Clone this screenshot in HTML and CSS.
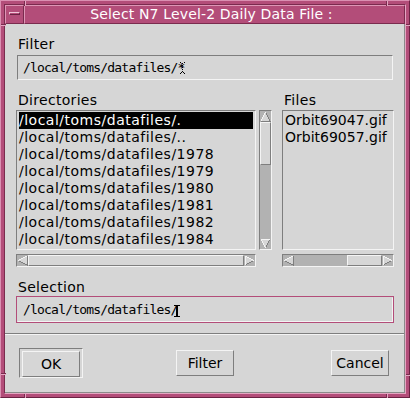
FILE: index.html
```html
<!DOCTYPE html>
<html>
<head>
<meta charset="utf-8">
<link rel="stylesheet" href="styles.css">
</head>
<body>
<div class="win">
  <span class="tick tv" style="left:23px;top:0"></span>
  <span class="tick tv" style="left:385px;top:0"></span>
  <span class="tick tv" style="left:23px;top:393px"></span>
  <span class="tick tv" style="left:385px;top:393px"></span>
  <span class="tick th" style="left:0;top:23px"></span>
  <span class="tick th" style="left:405px;top:23px"></span>
  <span class="tick th" style="left:0;top:372px"></span>
  <span class="tick th" style="left:405px;top:373px"></span>
  <div class="inner">
    <div class="titlebar">
      <div class="menubtn"><span class="menubar"></span></div>
      <div class="title">Select N7 Level-2 Daily Data File :</div>
    </div>
    <div class="content">
      <div class="label">Filter</div>
      <div class="field">
        <div class="field-in"><span class="mono">/local/toms/datafiles/*</span><svg class="cur cur-dot" width="5" height="12" viewBox="0 0 5 12"><rect x="0" y="0" width="1" height="1"/><rect x="4" y="0" width="1" height="1"/><rect x="2" y="1" width="1" height="1"/><rect x="2" y="3" width="1" height="1"/><rect x="2" y="5" width="1" height="1"/><rect x="2" y="7" width="1" height="1"/><rect x="2" y="9" width="1" height="1"/><rect x="0" y="11" width="1" height="1"/><rect x="4" y="11" width="1" height="1"/><rect x="1" y="10" width="1" height="1"/><rect x="3" y="10" width="1" height="1"/></svg></div>
      </div>
      <div class="lists">
        <div class="dircol">
          <div class="label">Directories</div>
          <div class="listrow">
            <div class="list dirlist">
              <div class="item sel">/local/toms/datafiles/.</div>
              <div class="item">/local/toms/datafiles/..</div>
              <div class="item">/local/toms/datafiles/1978</div>
              <div class="item">/local/toms/datafiles/1979</div>
              <div class="item">/local/toms/datafiles/1980</div>
              <div class="item">/local/toms/datafiles/1981</div>
              <div class="item">/local/toms/datafiles/1982</div>
              <div class="item">/local/toms/datafiles/1984</div>
            </div>
            <div class="vscroll">
              <svg class="arr" width="11" height="11" viewBox="0 0 11 11"><polygon points="5.5,1 10,10 1,10" fill="#d6d6d6"/><polyline points="5.5,1 10,10 1,10" fill="none" stroke="#7e7e7e"/><polyline points="1,10 5.5,1" fill="none" stroke="#f4f4f4"/></svg>
              <div class="vslider"></div>
              <div class="trough"></div>
              <svg class="arr" width="11" height="11" viewBox="0 0 11 11"><polygon points="1,1 10,1 5.5,10" fill="#d6d6d6"/><polyline points="10,1 5.5,10" fill="none" stroke="#7e7e7e"/><polyline points="5.5,10 1,1 10,1" fill="none" stroke="#f4f4f4"/></svg>
            </div>
          </div>
          <div class="hscroll dirh">
            <svg class="arr" width="11" height="11" viewBox="0 0 11 11"><polygon points="1,5.5 10,1 10,10" fill="#d6d6d6"/><polyline points="10,1 10,10 1,5.5" fill="none" stroke="#7e7e7e"/><polyline points="1,5.5 10,1" fill="none" stroke="#f4f4f4"/></svg>
            <div class="hslider grow"></div>
            <svg class="arr" width="11" height="11" viewBox="0 0 11 11"><polygon points="1,1 10,5.5 1,10" fill="#d6d6d6"/><polyline points="10,5.5 1,10" fill="none" stroke="#7e7e7e"/><polyline points="1,10 1,1 10,5.5" fill="none" stroke="#f4f4f4"/></svg>
          </div>
        </div>
        <div class="filecol">
          <div class="label">Files</div>
          <div class="list filelist">
            <div class="item">Orbit69047.gif</div>
            <div class="item">Orbit69057.gif</div>
          </div>
          <div class="hscroll">
            <svg class="arr" width="11" height="11" viewBox="0 0 11 11"><polygon points="1,5.5 10,1 10,10" fill="#d6d6d6"/><polyline points="10,1 10,10 1,5.5" fill="none" stroke="#7e7e7e"/><polyline points="1,5.5 10,1" fill="none" stroke="#f4f4f4"/></svg>
            <div class="trough grow"></div>
            <div class="hslider fileslider"></div>
            <svg class="arr" width="11" height="11" viewBox="0 0 11 11"><polygon points="1,1 10,5.5 1,10" fill="#d6d6d6"/><polyline points="10,5.5 1,10" fill="none" stroke="#7e7e7e"/><polyline points="1,10 1,1 10,5.5" fill="none" stroke="#f4f4f4"/></svg>
          </div>
        </div>
      </div>
      <div class="label sellabel">Selection</div>
      <div class="field focus">
        <div class="field-in"><span class="mono">/local/toms/datafiles/</span><svg class="cur cur-solid" width="6" height="12" viewBox="0 0 6 12"><rect x="0" y="0" width="6" height="1"/><rect x="2" y="0" width="2" height="12"/><rect x="0" y="11" width="6" height="1"/></svg></div>
      </div>
      <div class="sep"></div>
      <div class="buttons">
        <div class="defring"><div class="btn">OK</div></div>
        <div class="btn btn-filter">Filter</div>
        <div class="btn btn-cancel">Cancel</div>
      </div>
    </div>
  </div>
</div>
</body>
</html>
```

FILE: styles.css
```css
html, body {
  margin: 0;
  padding: 0;
  background: #d6d6d6;
}

.win {
  position: relative;
  width: 410px;
  height: 398px;
  box-sizing: border-box;
  background: #b34d79;
  border: 1px solid;
  border-color: #da90b2 #6a2343 #6a2343 #da90b2;
  padding: 3px;
  font-family: "DejaVu Sans", "Liberation Sans", sans-serif;
  color: #000;
}

.tick {
  position: absolute;
  box-sizing: border-box;
}
.tv {
  width: 2px;
  height: 5px;
  border-left: 1px solid #7a2b4e;
  border-right: 1px solid #e4a6c2;
}
.th {
  width: 5px;
  height: 2px;
  border-top: 1px solid #7a2b4e;
  border-bottom: 1px solid #e4a6c2;
}

.inner {
  height: 100%;
  box-sizing: border-box;
  border: 1px solid;
  border-color: #7a2b4e #e4a6c2 #e4a6c2 #7a2b4e;
  display: flex;
  flex-direction: column;
}

.titlebar {
  display: flex;
  height: 19px;
  flex: none;
}
.menubtn {
  width: 19px;
  box-sizing: border-box;
  border: 1px solid;
  border-color: #de96b6 #7a2b4e #7a2b4e #de96b6;
  padding: 6px 0 0 3px;
}
.menubar {
  display: block;
  width: 11px;
  height: 3px;
  box-sizing: border-box;
  border: 1px solid;
  border-color: #f0c6d8 #6a2343 #6a2343 #f0c6d8;
}
.title {
  flex: 1;
  box-sizing: border-box;
  border: 1px solid;
  border-color: #de96b6 #7a2b4e #7a2b4e #de96b6;
  color: #fff;
  font-size: 14px;
  letter-spacing: 0.15px;
  line-height: 17px;
  text-align: center;
  padding-right: 6px;
}

.content {
  flex: 1;
  background: #d6d6d6;
  border-right: 1px solid #8a8a8a;
  border-bottom: 1px solid #8a8a8a;
  padding: 12px 10px 0 11px;
  display: flex;
  flex-direction: column;
}

.label {
  font-size: 14px;
  letter-spacing: 0.3px;
  line-height: 17px;
  height: 17px;
  padding-left: 2px;
}

.field {
  height: 27px;
  box-sizing: border-box;
  border: 1px solid transparent;
  margin-top: 1px;
}
.field.focus {
  border-color: #b34d79;
  margin-top: 0;
}
.field-in {
  height: 100%;
  box-sizing: border-box;
  border: 1px solid;
  border-color: #7e7e7e #f4f4f4 #f4f4f4 #7e7e7e;
  padding-left: 5px;
  display: flex;
  align-items: center;
  white-space: nowrap;
}
.focus .field-in {
  border-color: #d6d6d6 #f4f4f4 #f4f4f4 #d6d6d6;
}
.mono {
  font-family: "DejaVu Sans Mono", "Liberation Mono", monospace;
  font-size: 13px;
  letter-spacing: -0.8px;
  line-height: 23px;
}
.cur {
  flex: none;
  fill: #000;
}
.cur-dot {
  margin-left: -5px;
  margin-top: 1px;
}
.cur-solid {
  margin-left: -4px;
  margin-top: 2px;
}

.lists {
  display: flex;
  gap: 10px;
  margin-top: 11px;
}
.dircol {
  width: 256px;
}
.filecol {
  width: 112px;
}
.listrow {
  display: flex;
  gap: 3px;
  margin-top: 1px;
}
.list {
  height: 140px;
  box-sizing: border-box;
  border: 1px solid;
  border-color: #7e7e7e #f4f4f4 #f4f4f4 #7e7e7e;
  padding: 1px 2px;
  overflow: hidden;
  white-space: nowrap;
}
.dirlist {
  width: 240px;
}
.filelist {
  margin-top: 1px;
}
.item {
  height: 17px;
  line-height: 17px;
  font-size: 14px;
}
.dirlist .item {
  letter-spacing: 0.5px;
}
.item.sel {
  background: #000;
  color: #fff;
}

.vscroll {
  width: 13px;
  height: 140px;
  box-sizing: border-box;
  border: 1px solid;
  border-color: #7e7e7e #f4f4f4 #f4f4f4 #7e7e7e;
  background: #b2b2b2;
  display: flex;
  flex-direction: column;
}
.arr {
  display: block;
  flex: none;
  shape-rendering: crispEdges;
}
.vslider {
  height: 43px;
  box-sizing: border-box;
  background: #d6d6d6;
  border: 1px solid;
  border-color: #f4f4f4 #7e7e7e #7e7e7e #f4f4f4;
}
.trough {
  background: #b2b2b2;
  flex: 1;
}

.hscroll {
  height: 13px;
  margin-top: 4px;
  box-sizing: border-box;
  border: 1px solid;
  border-color: #7e7e7e #f4f4f4 #f4f4f4 #7e7e7e;
  background: #b2b2b2;
  display: flex;
}
.dirh {
  width: 240px;
}
.hslider {
  box-sizing: border-box;
  background: #d6d6d6;
  border: 1px solid;
  border-color: #f4f4f4 #7e7e7e #7e7e7e #f4f4f4;
}
.grow {
  flex: 1;
}
.fileslider {
  width: 35px;
}

.sellabel {
  margin-top: 12px;
}

.sep {
  height: 2px;
  box-sizing: border-box;
  border-top: 1px solid #7e7e7e;
  border-bottom: 1px solid #f4f4f4;
  margin: 10px -10px 0 -11px;
}

.buttons {
  display: flex;
  align-items: center;
  margin-top: 13px;
  padding: 0 5px 0 3px;
}
.defring {
  width: 64px;
  height: 30px;
  box-sizing: border-box;
  border: 1px solid;
  border-color: #7e7e7e #f4f4f4 #f4f4f4 #7e7e7e;
  padding: 2px;
}
.btn {
  width: 58px;
  height: 26px;
  box-sizing: border-box;
  border: 1px solid;
  border-color: #f4f4f4 #7e7e7e #7e7e7e #f4f4f4;
  font-size: 14px;
  line-height: 24px;
  text-align: center;
}
.btn-filter {
  margin-left: 93px;
}
.btn-cancel {
  margin-left: auto;
}
```
